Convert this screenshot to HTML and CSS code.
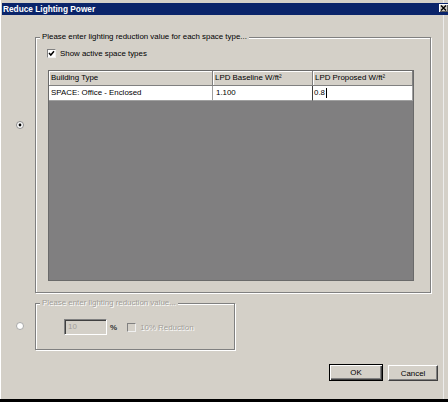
FILE: index.html
```html
<!DOCTYPE html>
<html>
<head>
<meta charset="utf-8">
<link rel="stylesheet" href="styles.css">
</head>
<body>
<div class="window">
  <div class="titlebar">
    <span class="title">Reduce Lighting Power</span>
    <span class="close"><svg width="7" height="6" viewBox="0 0 7 6"><path d="M1 0.5 L6 5.5 M6 0.5 L1 5.5" stroke="#000" stroke-width="1.4"/></svg></span>
  </div>
  <div class="content">
    <div class="option opt1">
      <div class="radio-col"><svg class="radio r1" width="8" height="8" viewBox="0 0 8 8"><circle cx="4" cy="4" r="3.5" fill="#fff" stroke="#8a8a8a" stroke-width="1"/><circle cx="4" cy="4" r="1.4" fill="#000"/></svg></div>
      <div class="group g1">
        <div class="legend">Please enter lighting reduction value for each space type...</div>
        <div class="check-row">
          <span class="box"><svg width="7" height="7" viewBox="0 0 7 7"><path d="M1 3 L2.8 5 L6 1.2" fill="none" stroke="#000" stroke-width="1.5"/></svg></span>
          <span>Show active space types</span>
        </div>
        <div class="grid">
          <div class="row head">
            <div class="cell c1">Building Type</div>
            <div class="cell c2">LPD Baseline W/ft²</div>
            <div class="cell c3">LPD Proposed W/ft²</div>
          </div>
          <div class="row data">
            <div class="cell c1">SPACE: Office - Enclosed</div>
            <div class="cell c2 v2">1.100</div>
            <div class="cell c3 v3">0.8<span class="caret"></span></div>
          </div>
        </div>
      </div>
    </div>
    <div class="option opt2">
      <div class="radio-col"><svg class="radio r2" width="8" height="8" viewBox="0 0 8 8"><circle cx="4" cy="4" r="3.5" fill="#fff" stroke="#a8a8a8" stroke-width="1"/></svg></div>
      <div class="group g2">
        <div class="legend disabled">Please enter lighting reduction value...</div>
        <div class="inputs">
          <span class="field">10</span>
          <span class="pct">%</span>
          <span class="box dis"></span>
          <span class="disabled">10% Reduction</span>
        </div>
      </div>
    </div>
    <div class="buttons">
      <div class="btn ok">OK</div>
      <div class="btn cancel">Cancel</div>
    </div>
  </div>
  <div class="taskbar"></div>
</div>
</body>
</html>
```
FILE: styles.css
```css
html, body {
  margin: 0;
  padding: 0;
  background: #d4d0c8;
}
body {
  font-family: "Liberation Sans", Arial, sans-serif;
  font-size: 7.9px;
  color: #000;
}
.window {
  width: 448px;
  height: 402px;
  display: flex;
  flex-direction: column;
  overflow: hidden;
  box-shadow: inset 1px 0 0 #fff, inset -4px 0 0 #d4d0c8, inset -5px 0 0 #ececec;
}
.titlebar {
  margin: 3px 0 0 2px;
  height: 12px;
  background: #0a246a;
  display: flex;
  justify-content: space-between;
  align-items: flex-start;
}
.title {
  color: #fff;
  font-weight: bold;
  font-size: 8.3px;
  line-height: 12px;
  padding-left: 1px;
}
.close {
  width: 9px;
  height: 8px;
  margin-top: 1px;
  background: #d4d0c8;
  box-sizing: border-box;
  display: flex;
  align-items: center;
  justify-content: center;
  box-shadow: inset 1px 1px 0 #fff, inset -1px -1px 0 #606060;
}
.close svg { display: block; }
.content {
  padding-top: 22px;
}
.option {
  display: flex;
  align-items: flex-start;
}
.opt2 { margin-top: 10px; }
.radio-col {
  width: 35px;
  flex: none;
}
.radio { display: block; margin-left: 16px; }
.r1 { margin-top: 84px; }
.r2 { margin-top: 19px; }
.group {
  border: 1px solid #808080;
  box-shadow: inset 1px 1px 0 #fff, 1px 1px 0 #fff;
  box-sizing: border-box;
}
.g1 {
  width: 396px;
  padding-bottom: 11px;
}
.g2 {
  width: 200px;
  padding-bottom: 14px;
}
.legend {
  width: max-content;
  margin: -6px 0 0 4px;
  padding: 0 2px;
  line-height: 10px;
  background: #d4d0c8;
}
.disabled {
  color: #a19e98;
  text-shadow: 1px 1px 0 #fff;
}
.check-row {
  display: flex;
  align-items: center;
  height: 9px;
  margin: 7px 0 0 11px;
}
.box {
  width: 9px;
  height: 9px;
  box-sizing: border-box;
  background: #fff;
  border: 1px solid;
  border-color: #808080 #f0f0f0 #f0f0f0 #808080;
  display: flex;
  align-items: center;
  justify-content: center;
  margin-right: 4px;
  flex: none;
}
.box svg { display: block; }
.box.dis {
  background: #d4d0c8;
  margin-left: 10px;
}
.grid {
  margin: 12px 0 0 12px;
  width: 366px;
  height: 211px;
  box-sizing: border-box;
  border: 1px solid #6a6a6a;
  background: #807f80;
}
.row {
  display: flex;
}
.cell {
  box-sizing: border-box;
  padding-left: 2px;
  white-space: nowrap;
  overflow: hidden;
}
.c1 { width: 164px; }
.c2 { width: 100px; }
.c3 { width: 100px; }
.head .cell {
  height: 15px;
  line-height: 14px;
  background: #d4d0c8;
  border-right: 1px solid #808080;
  border-bottom: 1px solid #808080;
  box-shadow: inset 1px 1px 0 #fff;
}
.data .cell {
  height: 15px;
  line-height: 14px;
  background: #fff;
  border-right: 1px solid #a0a0a0;
  border-bottom: 1px solid #a0a0a0;
}
.data .v2 { padding-left: 3px; }
.data .v3 {
  padding-left: 1px;
  border-left: 1px solid #404040;
  margin-left: -1px;
  width: 101px;
  display: flex;
  align-items: center;
}
.caret {
  display: inline-block;
  width: 1px;
  height: 10px;
  background: #000;
  margin-left: 1px;
}
.inputs {
  display: flex;
  align-items: center;
  height: 16px;
  margin: 11px 0 0 28px;
}
.field {
  width: 43px;
  height: 16px;
  box-sizing: border-box;
  border: 1px solid;
  border-color: #808080 #fff #fff #808080;
  box-shadow: inset 1px 1px 0 #404040;
  padding-left: 3px;
  line-height: 14px;
  color: #a19e98;
  background: #d4d0c8;
}
.pct {
  margin-left: 3px;
  font-weight: bold;
  font-size: 8px;
  color: #333;
}
.buttons {
  display: flex;
  justify-content: flex-end;
  align-items: flex-end;
  gap: 5px;
  padding-right: 10px;
  margin-top: 14px;
}
.btn {
  box-sizing: border-box;
  display: flex;
  align-items: center;
  justify-content: center;
  background: #d4d0c8;
}
.cancel {
  width: 50px;
  height: 16px;
  border: 1px solid;
  border-color: #fff #404040 #404040 #fff;
  box-shadow: inset -1px -1px 0 #808080;
}
.ok {
  width: 54px;
  height: 17px;
  border: 1px solid #000;
  box-shadow: inset 1px 1px 0 #fff, inset -1px -1px 0 #404040, inset -2px -2px 0 #808080;
}
.taskbar {
  margin-top: auto;
  height: 3px;
  background: #000;
}
```
